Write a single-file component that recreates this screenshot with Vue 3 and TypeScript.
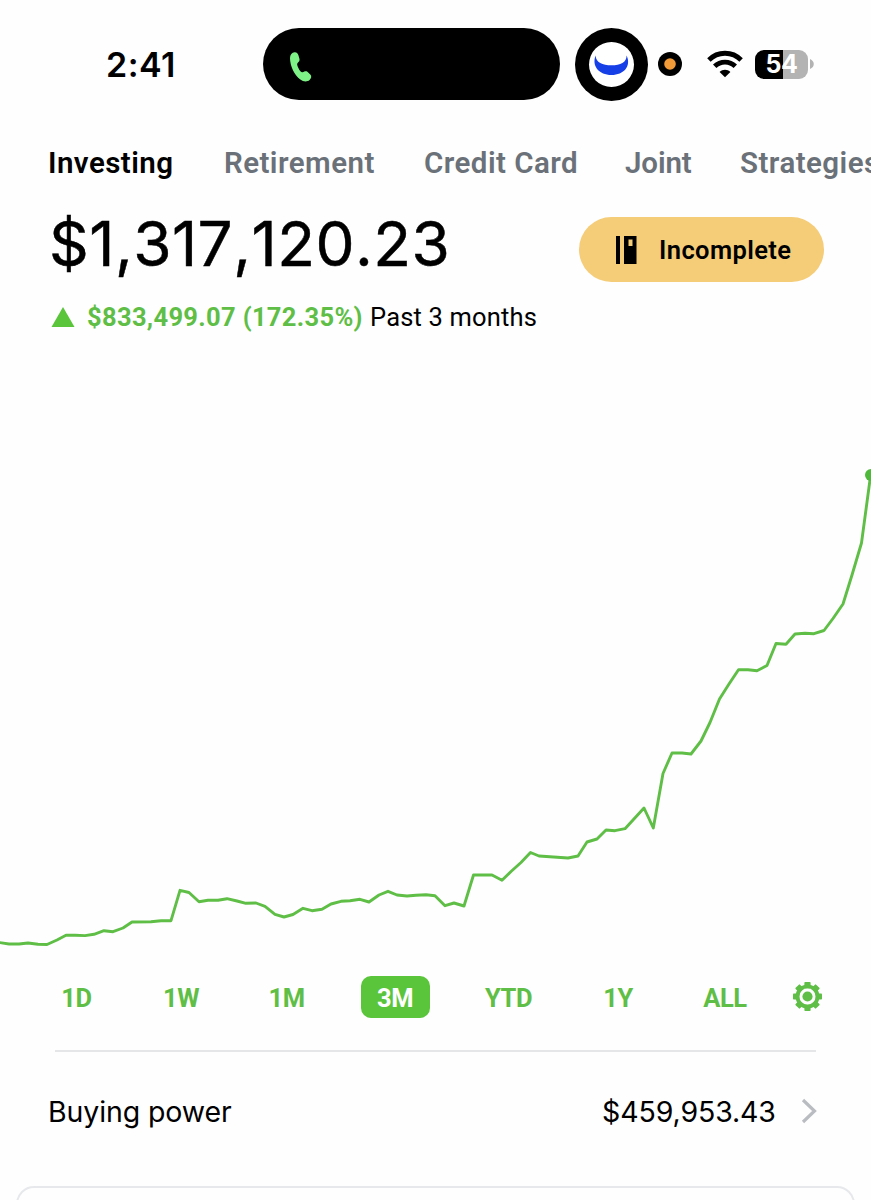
<script setup lang="ts">
interface Range {
  label: string
  key: string
}

const tabs: string[] = ['Investing', 'Retirement', 'Credit Card', 'Joint', 'Strategies']

const ranges: Range[] = [
  { label: '1D', key: 'd1' },
  { label: '1W', key: 'w1' },
  { label: '1M', key: 'm1' },
  { label: '3M', key: 'm3' },
  { label: 'YTD', key: 'ytd' },
  { label: '1Y', key: 'y1' },
  { label: 'ALL', key: 'all' },
]
const activeRange = 'm3'

const series: [number, number][] = [
  [-1, 942.5], [9, 944], [19, 944], [28, 943], [38, 944.3], [47, 944.5], [57, 940], [66, 935.3],
  [75, 935.3], [85, 935.6], [94, 934.3], [104, 930.7], [113, 931.7], [123, 928], [132, 922],
  [151, 921.7], [161, 920.7], [171, 920.7], [180, 890.3], [189, 892.5], [199, 901.7], [208, 900.3],
  [218, 900.3], [227, 898.7], [237, 901], [246, 903.3], [256, 903], [265, 906.3], [275, 914.3],
  [284, 917], [293, 914.5], [303, 908.3], [312, 910.7], [322, 909.3], [331, 904], [341, 901.3],
  [350, 900.7], [360, 899.3], [369, 902], [379, 895], [388, 891.3], [397, 895], [407, 896],
  [416, 895.2], [426, 894.8], [435, 895.7], [445, 905.7], [454, 903], [464, 906], [473.5, 875],
  [492, 875], [502, 880.3], [511, 871.5], [521, 862.5], [530.5, 852.5], [539, 856], [568, 858],
  [578, 856], [587, 842], [597, 839], [606, 830], [615, 830.7], [625, 828.7], [644, 808],
  [653.3, 828], [663, 773.5], [672, 753], [682, 753], [691, 754], [701, 741], [710, 722.5],
  [719.5, 699], [729, 684], [738.5, 669.7], [748, 669.7], [757, 670.7], [767, 665.5],
  [776, 643.5], [786, 644.3], [795, 634], [805, 633.3], [814, 633.7], [824, 630.5],
  [833, 618.5], [843, 604], [852, 575], [861.5, 543], [870.5, 476],
]
const linePoints = series.map(([x, y]) => `${x},${y}`).join(' ')
const teeth = [0, 45, 90, 135, 180, 225, 270, 315]
</script>

<template>
  <main class="screen">
    <header class="status">
      <span class="time">2:41</span>
      <div class="island">
        <svg class="phone" width="24" height="32" viewBox="0 0 24 32">
          <path
            d="M1 7 C1 3.500 3 1.500 5.500 1.200 C7.800 1 9 2.500 9.500 4.500 L10.500 8 C10.900 9.800 9.800 10.800 8.800 11.800 C7.600 13 8.200 14.500 9.400 17 C10.600 19.500 12 21.600 13.600 21.300 C15.300 20.700 16.800 19.600 18.400 20.800 L21.300 23.600 C22.900 25.200 22.400 27.300 20.600 29 C18 31.200 14.300 30.800 11.300 28.600 C5.500 24.300 1 15 1 7 Z"
            fill="#7ef287"
          />
        </svg>
      </div>
      <svg class="app-dot" width="73" height="73" viewBox="0 0 73 73">
        <circle cx="36.500" cy="36.500" r="36.500" fill="#000" />
        <circle cx="36.500" cy="36.500" r="22.500" fill="#fff" />
        <path
          d="M20.600 27.500 C20.900 34.500 27.500 37.300 36.500 37.300 C45.500 37.300 51.500 34.500 51.600 27.500 C56.500 38 49 47 36.500 47 C24 47 16.500 38 20.600 27.500 Z"
          fill="#173fe8"
        />
      </svg>
      <svg class="mic" width="24" height="24" viewBox="0 0 24 24">
        <circle cx="12" cy="12" r="12" fill="#000" />
        <circle cx="12" cy="12" r="5.800" fill="#f29a38" />
      </svg>
      <svg class="wifi" width="36" height="28" viewBox="0 0 36 28">
        <g fill="none" stroke="#000" stroke-width="4.800">
          <path d="M1.900 10 C10.700 1 25.300 1 34.100 10" />
          <path d="M7.700 16.300 C13.400 10.600 22.600 10.600 28.300 16.300" />
        </g>
        <path d="M18 27.300 L12.600 21.900 C15.500 19.100 20.500 19.100 23.400 21.900 Z" fill="#000" />
      </svg>
      <div class="battery">
        <span class="charge">54</span>
      </div>
      <svg class="nub" width="4" height="10" viewBox="0 0 4 10">
        <path d="M0 0 C5 2 5 8 0 10 Z" fill="#b3b3b3" />
      </svg>
    </header>

    <nav class="tabs">
      <span v-for="(tab, i) in tabs" :key="tab" class="tab" :class="{ current: i === 0, short: tab.length < 6 }">{{ tab }}</span>
    </nav>

    <section class="summary">
      <div class="balance">$1,317,120.23</div>
      <button class="badge">
        <svg width="21" height="28" viewBox="0 0 21 28">
          <path d="M0 0 H4 V28 H0 Z" fill="#000" />
          <path d="M8 0 H20.500 V28 H8 Z M12.500 3.500 V10 H16.500 V3.500 Z" fill="#000" fill-rule="evenodd" />
        </svg>
        <span>Incomplete</span>
      </button>
    </section>

    <section class="delta">
      <svg width="24" height="20" viewBox="0 0 24 20">
        <path d="M12 0 L23.500 20 H0.500 Z" fill="#5ac53b" />
      </svg>
      <span class="gain">$833,499.07 (172.35%)</span>
      <span class="period">Past 3 months</span>
    </section>

    <svg class="chart" width="871" height="620" viewBox="0 340 871 620">
      <polyline :points="linePoints" fill="none" stroke="#5fbe46" stroke-width="2.900" stroke-linejoin="round" />
      <circle cx="871" cy="475" r="6" fill="#4eb83a" />
    </svg>

    <nav class="ranges">
      <span v-for="r in ranges" :key="r.key" class="range" :class="{ active: r.key === activeRange }">{{ r.label }}</span>
      <svg class="gear" width="29" height="29" viewBox="-14 -14 28 28">
        <g fill="#5fbe46">
          <rect v-for="a in teeth" :key="a" x="-3" y="-14" width="6" height="6" rx="0.800" :transform="`rotate(${a})`" />
          <circle r="4.900" />
        </g>
        <circle r="9.700" fill="none" stroke="#5fbe46" stroke-width="3.700" />
      </svg>
    </nav>

    <div class="divider"></div>

    <section class="power">
      <span class="power-label">Buying power</span>
      <span class="power-value">$459,953.43</span>
      <svg width="17" height="26" viewBox="0 0 17 26">
        <path d="M2 2 L13.500 13 L2 24" fill="none" stroke="#b9bdc2" stroke-width="3.200" />
      </svg>
    </section>

    <div class="next-card"></div>
  </main>
</template>

<style>
body {
  margin: 0;
  background: #fefefe;
}
</style>

<style scoped>
.screen {
  width: 871px;
  height: 1200px;
  overflow: hidden;
  background: #fefefe;
  color: #000;
  font-family: Roboto, "Liberation Sans", sans-serif;
  white-space: nowrap;
  display: flex;
  flex-direction: column;
}
.screen > * {
  flex-shrink: 0;
  box-sizing: border-box;
}
.status {
  height: 128px;
  display: flex;
  align-items: center;
  padding-left: 106px;
}
.time {
  width: 157px;
  padding-top: 1px;
  box-sizing: border-box;
  letter-spacing: 0.500px;
  font: 600 34px/40px Inter, sans-serif;
}
.island {
  width: 297px;
  height: 72px;
  border-radius: 36px;
  background: #000;
  padding: 23px 0 0 26px;
  box-sizing: border-box;
}
.phone {
  display: block;
}
.app-dot {
  margin-left: 15px;
}
.mic {
  margin-left: 10px;
}
.wifi {
  margin-left: 25px;
}
.battery {
  margin-left: 12px;
  width: 53px;
  height: 29px;
  border-radius: 9px;
  background: linear-gradient(90deg, #000 0 28px, #b3b3b3 28px);
  text-align: center;
}
.charge {
  color: #fff;
  letter-spacing: -0.500px;
  font: 700 25px/29px Inter, sans-serif;
}
.nub {
  margin-left: 2px;
}
.tabs {
  height: 70px;
  padding: 15px 0 0 48px;
  display: grid;
  grid-template-columns: 176px 200px 201px 115px 150px;
}
.tab {
  font-weight: 600;
  font-size: 29.500px;
  line-height: 40px;
  letter-spacing: 0.450px;
  color: #6b7178;
}
.tab.short {
  letter-spacing: -0.100px;
}
.tab.current {
  color: #000;
}
.summary {
  height: 96px;
  padding: 0 47px 0 49px;
  display: flex;
  justify-content: space-between;
}
.balance {
  font: 400 62px/92px Inter, sans-serif;
  font-kerning: none;
  font-feature-settings: "calt" 0;
  letter-spacing: 0.450px;
  -webkit-text-stroke: 0.500px #000;
}
.badge {
  margin-top: 19px;
  width: 245px;
  height: 65px;
  border: 0;
  border-radius: 33px;
  background: #f5cc78;
  color: #000;
  padding: 0 0 0 37px;
  display: flex;
  align-items: center;
  gap: 22px;
  font: 600 25.500px/32px Roboto, sans-serif;
  letter-spacing: 0.400px;
}
.delta {
  height: 46px;
  padding-left: 51px;
  display: flex;
  align-items: center;
}
.gain {
  width: 283px;
  margin-left: 12px;
  color: #5fbe46;
  font-weight: 700;
  font-size: 25.500px;
  letter-spacing: 0.330px;
}
.period {
  font-size: 25.500px;
  letter-spacing: 0.180px;
}
.chart {
  display: block;
}
.ranges {
  height: 73px;
  padding: 0 0 0 23px;
  display: grid;
  grid-template-columns: 107px 102px 109px 108px 119px 100px 114px 51px;
  align-items: center;
  justify-items: center;
}
.range {
  height: 42px;
  padding-top: 1px;
  box-sizing: border-box;
  color: #5fbe46;
  font-weight: 700;
  font-size: 25.500px;
  line-height: 42px;
  letter-spacing: -0.400px;
}
.range.active {
  width: 69px;
  background: #5ac53b;
  color: #fff;
  border-radius: 10px;
  text-align: center;
}
.divider {
  width: 761px;
  height: 2px;
  margin: 17px 0 0 55px;
  background: #e5e6e7;
}
.power {
  height: 118px;
  padding: 0 53px 0 48px;
  display: flex;
  align-items: center;
  font-family: Inter, sans-serif;
  font-size: 28.500px;
  letter-spacing: -0.120px;
}
.power-label {
  flex: 1;
}
.power-value {
  width: 199px;
}
.next-card {
  margin: 16px 16px 0;
  height: 80px;
  border: 2px solid #e6e8eb;
  border-radius: 18px;
}
</style>
